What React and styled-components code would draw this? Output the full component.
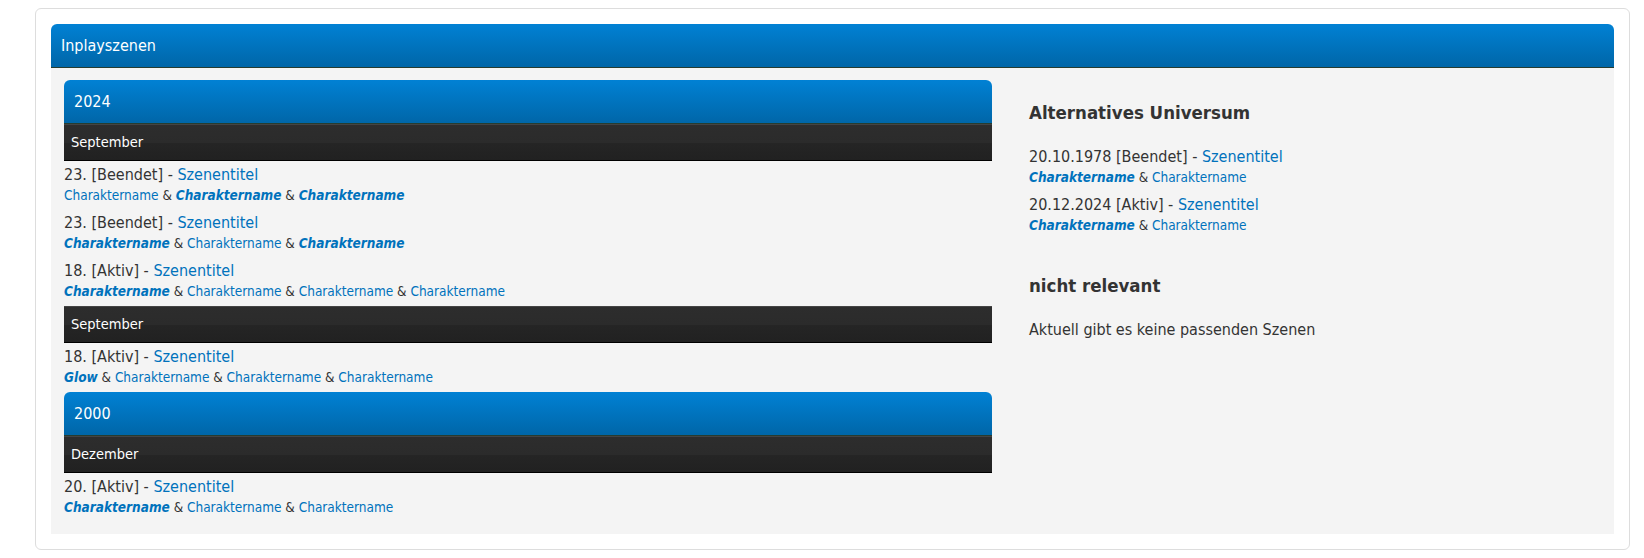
import styled, { createGlobalStyle } from 'styled-components'

const GlobalStyle = createGlobalStyle`
    html, body {
        margin: 0;
        padding: 0;
        background: #fff;
    }

    body {
        font-family: "DejaVu Sans Condensed", "DejaVu Sans", sans-serif;
        font-stretch: semi-condensed;
        color: #333;
    }

    a {
        color: #0072bc;
        text-decoration: none;
    }
`

const left = [
    {
        year: '2024',
        months: [
            {
                name: 'September',
                scenes: [
                    { date: '23.', status: 'Beendet', title: 'Szenentitel', chars: [['Charaktername', false], ['Charaktername', true], ['Charaktername', true]] },
                    { date: '23.', status: 'Beendet', title: 'Szenentitel', chars: [['Charaktername', true], ['Charaktername', false], ['Charaktername', true]] },
                    { date: '18.', status: 'Aktiv', title: 'Szenentitel', chars: [['Charaktername', true], ['Charaktername', false], ['Charaktername', false], ['Charaktername', false]] },
                ],
            },
            {
                name: 'September',
                scenes: [
                    { date: '18.', status: 'Aktiv', title: 'Szenentitel', chars: [['Glow', true], ['Charaktername', false], ['Charaktername', false], ['Charaktername', false]] },
                ],
            },
        ],
    },
    {
        year: '2000',
        months: [
            {
                name: 'Dezember',
                scenes: [
                    { date: '20.', status: 'Aktiv', title: 'Szenentitel', chars: [['Charaktername', true], ['Charaktername', false], ['Charaktername', false]] },
                ],
            },
        ],
    },
]

const right = [
    {
        title: 'Alternatives Universum',
        scenes: [
            { date: '20.10.1978', status: 'Beendet', title: 'Szenentitel', chars: [['Charaktername', true], ['Charaktername', false]] },
            { date: '20.12.2024', status: 'Aktiv', title: 'Szenentitel', chars: [['Charaktername', true], ['Charaktername', false]] },
        ],
    },
    {
        title: 'nicht relevant',
        scenes: [],
    },
]

function Scene({ scene }) {
    return (
        <Entry>
            <MainLine>
                {scene.date} [{scene.status}] - <a href="#">{scene.title}</a>
            </MainLine>
            <Chars>
                {scene.chars.map(([name, own], i) => (
                    <span key={i}>
                        {i > 0 && ' & '}
                        <CharLink href="#" $own={own}>{name}</CharLink>
                    </span>
                ))}
            </Chars>
        </Entry>
    )
}

export default function App() {
    return (
        <>
            <GlobalStyle />
            <Wrapper>
                <Table>
                    <Head>Inplayszenen</Head>
                    <Body>
                        <LeftCol>
                            {left.map((y, yi) => (
                                <div key={yi}>
                                    <YearBar>{y.year}</YearBar>
                                    {y.months.map((m, mi) => (
                                        <MonthGroup key={mi}>
                                            <MonthBar>{m.name}</MonthBar>
                                            {m.scenes.map((s, si) => <Scene key={si} scene={s} />)}
                                        </MonthGroup>
                                    ))}
                                </div>
                            ))}
                        </LeftCol>
                        <RightCol>
                            {right.map((sec, i) => (
                                <Section key={i}>
                                    <SectionTitle>{sec.title}</SectionTitle>
                                    {sec.scenes.length
                                        ? sec.scenes.map((s, si) => <Scene key={si} scene={s} />)
                                        : <Entry><MainLine>Aktuell gibt es keine passenden Szenen</MainLine></Entry>}
                                </Section>
                            ))}
                        </RightCol>
                    </Body>
                </Table>
            </Wrapper>
        </>
    )
}

const Wrapper = styled.div`
    padding: 8px 14px 8px 35px;
`

const Table = styled.div`
    background: #fff;
    border: 1px solid #ddd;
    border-radius: 6px;
    padding: 15px;
`

const Head = styled.div`
    height: 43px;
    line-height: 43px;
    padding: 0 10px;

    background: linear-gradient(to bottom, #0181d4, #0066a8);
    border-bottom: 1px solid #263c30;
    border-radius: 6px 6px 0 0;

    color: #fff;
    font-size: 16px;
`

const Body = styled.div`
    display: grid;
    grid-template-columns: 928px 1fr;
    column-gap: 37px;

    padding: 12px 13px 12px;
    background: #f4f4f4;
`

const LeftCol = styled.div``

const YearBar = styled.div`
    height: 43px;
    line-height: 43px;
    padding: 0 10px;

    background: linear-gradient(to bottom, #0181d4, #0066a8);
    border-bottom: 1px solid #263c30;
    border-radius: 6px 6px 0 0;

    color: #fff;
    font-size: 16px;
`

const MonthGroup = styled.div`
    margin-bottom: 1px;
`

const MonthBar = styled.div`
    height: 35px;
    line-height: 35px;
    padding: 0 7px;

    background:
        repeating-linear-gradient(90deg, #2b2b2b 0 1px, transparent 1px 3px) 0 50% / 100% 1px no-repeat,
        linear-gradient(to bottom, #2d2d2d 0%, #2b2b2b 50%, #252525 51%, #212121 100%);
    border-top: 1px solid #444;
    border-bottom: 1px solid #000;

    color: #fff;
    font-size: 14.5px;
`

const Entry = styled.div`
    padding: 4px 0 4px;
`

const MainLine = styled.div`
    font-size: 16px;
    line-height: 20px;
`

const Chars = styled.div`
    font-size: 13.5px;
    line-height: 20px;
`

const CharLink = styled.a`
    font-weight: ${p => (p.$own ? 'bold' : 'normal')};
    font-style: ${p => (p.$own ? 'italic' : 'normal')};
`

const RightCol = styled.div`
    padding-top: 22px;
`

const Section = styled.div`
    & + & {
        margin-top: 36px;
    }
`

const SectionTitle = styled.h3`
    margin: 0 0 19px;
    font-size: 18.5px;
    line-height: 22px;
    font-weight: bold;
    color: #333;
`
